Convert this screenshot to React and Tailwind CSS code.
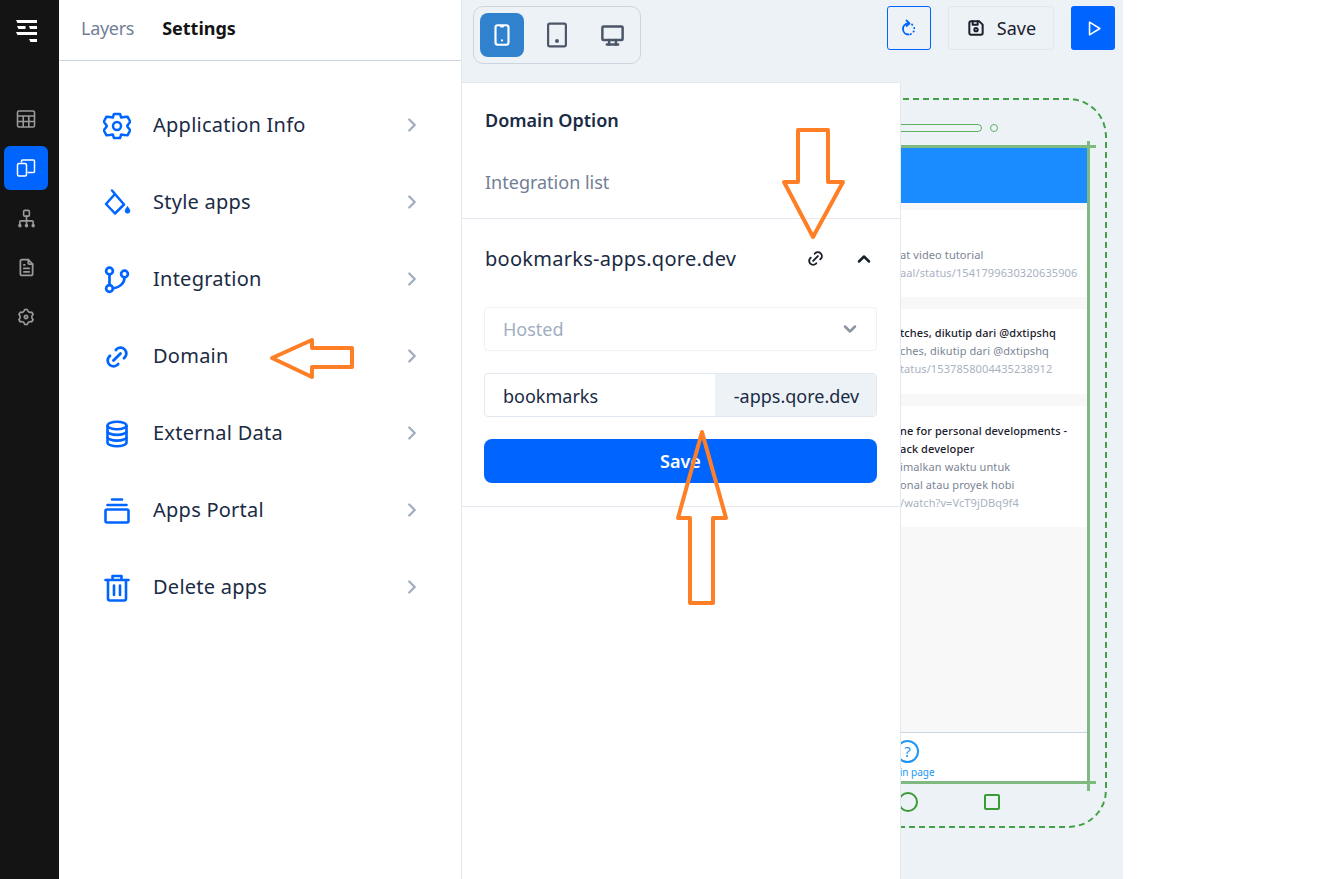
import React from 'react';
import {
  TbFileText, TbLink, TbChevronRight, TbChevronUp, TbChevronDown, TbDeviceMobile,
  TbDeviceDesktop, TbDeviceFloppy, TbPlayerPlay,
} from 'react-icons/tb';
import { RiSettings3Line } from 'react-icons/ri';

const GearIcon = ({ className }) => (
  <svg viewBox="0 0 28 28" fill="none" stroke="currentColor" strokeWidth="2.500" strokeLinejoin="round" className={className}>
    <path d="M11 2h6l1.200 3.500 3-.600 3.300-.200 2.800 5-2.200 2.800-.900 1.500.900 1.500 2.200 2.800-2.800 5-3.300-.200-3-.600L17 26h-6l-1.200-3.500-3 .600-3.300.200-2.800-5 2.200-2.800.900-1.500-.900-1.500-2.200-2.800 2.800-5 3.300.200 3 .600z" />
    <circle cx="14" cy="14" r="4" />
  </svg>
);

const BucketIcon = ({ className }) => (
  <svg viewBox="0 0 28 28" fill="none" stroke="currentColor" strokeWidth="2.500" strokeLinejoin="round" strokeLinecap="round" className={className}>
    <path d="M9 1.500L21 15.500L12 24.500L3 15L12 5" />
    <path d="M24.500 17.500c1.500 2 2.500 3 2.500 4.300a2.500 2.500 0 0 1-5 0c0-1.300 1-2.300 2.500-4.300z" fill="currentColor" strokeWidth="0.500" />
  </svg>
);

const BranchIcon = ({ className }) => (
  <svg viewBox="0 0 28 28" fill="none" stroke="currentColor" strokeWidth="2.700" strokeLinecap="round" className={className}>
    <circle cx="6.500" cy="5" r="3.400" />
    <circle cx="21.500" cy="8" r="3.400" />
    <circle cx="6.500" cy="22.500" r="3.400" />
    <path d="M6.500 8.500v10.500M21.500 11.500c0 6-5 10-11.500 11" />
  </svg>
);

const DatabaseIcon = ({ className }) => (
  <svg viewBox="0 0 28 28" fill="none" stroke="currentColor" strokeWidth="2.600" className={className}>
    <ellipse cx="14" cy="5.500" rx="9.500" ry="3.700" />
    <path d="M4.500 5.500v17c0 2 4.200 3.700 9.500 3.700s9.500-1.700 9.500-3.700v-17" />
    <path d="M4.500 11.200c0 2 4.200 3.700 9.500 3.700s9.500-1.700 9.500-3.700M4.500 16.900c0 2 4.200 3.700 9.500 3.700s9.500-1.700 9.500-3.700" />
  </svg>
);

const PortalIcon = ({ className }) => (
  <svg viewBox="0 0 28 28" fill="none" stroke="currentColor" strokeWidth="2.600" strokeLinecap="round" strokeLinejoin="round" className={className}>
    <path d="M9 2.500h10M4.500 8h19" />
    <rect x="2.500" y="12.500" width="23" height="13" rx="1.500" />
  </svg>
);

const TrashIcon = ({ className }) => (
  <svg viewBox="0 0 28 28" fill="none" stroke="currentColor" strokeWidth="2.600" strokeLinecap="round" strokeLinejoin="round" className={className}>
    <path d="M2.500 6h23M9.500 6V2h9v4" />
    <path d="M5 6v18.500a2 2 0 0 0 2 2h14a2 2 0 0 0 2-2V6" />
    <path d="M11 11.500v9.500M17 11.500v9.500" />
  </svg>
);

const TableIcon = ({ size }) => (
  <svg width={size} height={size} viewBox="0 0 20 20" fill="none" stroke="currentColor" strokeWidth="1.600">
    <rect x="1.500" y="2" width="17" height="16" rx="1.500" />
    <path d="M1.500 7h17M1.500 12.500h17M7.200 7v11M12.800 7v11" />
  </svg>
);

const DevicesIcon = ({ size }) => (
  <svg width={size} height={size} viewBox="0 0 20 20" fill="none" stroke="currentColor" strokeWidth="1.500" strokeLinejoin="round">
    <path d="M5.500 4.500V3a1 1 0 0 1 1-1h11a1 1 0 0 1 1 1v10.500a1 1 0 0 1-1 1h-6" />
    <rect x="1.500" y="5.500" width="9" height="12.500" rx="1.500" />
  </svg>
);

const SitemapIcon = ({ size }) => (
  <svg width={size} height={size} viewBox="0 0 20 20" fill="none" stroke="currentColor" strokeWidth="1.700" strokeLinecap="round">
    <rect x="7" y="1.500" width="6" height="6" rx="1" />
    <path d="M10 7.500v10M3 17v-3.500a1 1 0 0 1 1-1h12a1 1 0 0 1 1 1V17" />
    <circle cx="3" cy="17.500" r="1" fill="currentColor" />
    <circle cx="10" cy="17.500" r="1" fill="currentColor" />
    <circle cx="17" cy="17.500" r="1" fill="currentColor" />
  </svg>
);

const TabletIcon = ({ size }) => (
  <svg width={size} height={size} viewBox="0 0 24 24" fill="none" stroke="currentColor" strokeWidth="2">
    <rect x="3.800" y="1.500" width="16.400" height="21" rx="1.500" />
    <circle cx="12" cy="17.500" r="1.800" fill="currentColor" stroke="none" />
  </svg>
);

const RefreshIcon = ({ size }) => (
  <svg width={size} height={size} viewBox="0 0 18 18" fill="none" stroke="currentColor" strokeWidth="1.800" strokeLinecap="round" strokeLinejoin="round">
    <path d="M8.500 4.500C5 4.500 3 7 3 10c0 3 2.300 5.500 5.500 5.500" />
    <path d="M6.500 1.500L9.500 4.500L6.500 7" />
    <path d="M12 5.500l.3.300M14.200 8.800v.4M13.800 12.300l-.3.300M11 15l-.4.200" />
  </svg>
);

const menu = [
  { icon: GearIcon, label: 'Application Info' },
  { icon: BucketIcon, label: 'Style apps' },
  { icon: BranchIcon, label: 'Integration' },
  { icon: TbLink, label: 'Domain', stroke: 2.4 },
  { icon: DatabaseIcon, label: 'External Data' },
  { icon: PortalIcon, label: 'Apps Portal' },
  { icon: TrashIcon, label: 'Delete apps' },
];

const Rail = () => (
  <div className="w-[59px] shrink-0 bg-[#141414] flex flex-col items-center pr-[7px]">
    <svg viewBox="0 0 24 24" className="w-[24px] h-[24px] mt-[19px] ml-[1px]" fill="#fff">
      <path d="M1 1h21v3H2.500zM2 7h8.500v3H3.500zM14 7h8v3h-7zM1 13h21v3H2.500zM14 20h8v3h-6.500z" />
    </svg>
    <div className="mt-[54px] flex flex-col items-center text-[#9a9a9a]">
      <div className="w-[44px] h-[44px] flex items-center justify-center"><TableIcon size={20} /></div>
      <div className="mt-[5px] w-[44px] h-[44px] rounded-[6px] bg-[#0065ff] flex items-center justify-center text-white"><DevicesIcon size={20} /></div>
      <div className="mt-[6px] w-[44px] h-[44px] flex items-center justify-center"><SitemapIcon size={19} /></div>
      <div className="mt-[5px] w-[44px] h-[44px] flex items-center justify-center"><TbFileText size={21} /></div>
      <div className="mt-[6px] w-[44px] h-[44px] flex items-center justify-center"><RiSettings3Line size={20} /></div>
    </div>
  </div>
);

const SettingsPanel = () => (
  <div className="w-[403px] shrink-0 bg-white border-r border-[#e2e8f0] flex flex-col">
    <div className="h-[61px] border-b border-[#cbd5e0] flex items-center px-[22px] gap-[28px] text-[18px] pb-[3px]">
      <span className="text-[#718096] tracking-[-0.3px]">Layers</span>
      <span className="font-bold text-[#141414]">Settings</span>
    </div>
    <div className="pt-[26px] pl-[43px] pr-[38px]">
      {menu.map((item) => (
        <div key={item.label} className="h-[77px] flex items-center text-[#1a2b44]">
          <div className="w-[29px] flex items-center justify-center shrink-0">
            <item.icon className="w-[28px] h-[28px] text-[#0065ff] shrink-0" strokeWidth={item.stroke} />
          </div>
          <span className="ml-[22px] text-[20px] tracking-[0.25px] flex-1 pb-[1px]">{item.label}</span>
          <TbChevronRight className="w-[22px] h-[22px] text-[#a0aec0] mb-[1px]" strokeWidth={2.5} />
        </div>
      ))}
    </div>
  </div>
);

const Toolbar = () => (
  <div className="h-[82px] flex items-start justify-between pt-[6px] pl-[11px] pr-[8px] relative z-10">
    <div className="h-[58px] w-[168px] rounded-[10px] border border-[#cbd5e0] flex items-center pl-[6px] text-[#4a5568]">
      <div className="w-[44px] h-[44px] rounded-[8px] bg-[#3182ce] text-white flex items-center justify-center"><TbDeviceMobile size={26} /></div>
      <div className="w-[44px] h-[44px] ml-[11px] flex items-center justify-center"><TabletIcon size={26} /></div>
      <div className="w-[44px] h-[44px] ml-[11px] flex items-center justify-center"><TbDeviceDesktop size={27} strokeWidth={2.2} /></div>
    </div>
    <div className="flex gap-[17px]">
      <div className="w-[44px] h-[44px] rounded-[3px] border border-[#0065ff] text-[#0065ff] flex items-center justify-center"><RefreshIcon size={18} /></div>
      <div className="w-[106px] h-[44px] rounded-[3px] border border-[#e2e8f0] flex items-center justify-center gap-[11px] text-[18px] text-[#1a202c]">
        <TbDeviceFloppy size={20} strokeWidth={2.4} /> Save
      </div>
      <div className="w-[44px] h-[44px] rounded-[3px] bg-[#0065ff] text-white flex items-center justify-center"><TbPlayerPlay size={19} /></div>
    </div>
  </div>
);

const DomainPanel = () => (
  <div className="w-[439px] flex-1 bg-white border-r border-t border-[#e2e8f0] relative z-10">
    <div className="h-[136px] border-b border-[#e2e8f0] pl-[23px]">
      <div className="pt-[24px] text-[18px] font-semibold leading-[26px] text-[#1a2b44]">Domain Option</div>
      <div className="pt-[36px] text-[18px] leading-[26px] text-[#718096]">Integration list</div>
    </div>
    <div className="h-[288px] border-b border-[#e2e8f0] pl-[22px] pr-[23px]">
      <div className="h-[80px] flex items-center text-[#1a2b44]">
        <span className="text-[20px] tracking-[0.27px] flex-1 pl-[1px] pb-[1px]">bookmarks-apps.qore.dev</span>
        <TbLink className="w-[19px] h-[19px] text-[#1a202c] mb-[1px]" strokeWidth={2.4} />
        <TbChevronUp className="w-[20px] h-[20px] ml-[29px] mr-[3px] mb-[1px] text-[#1a202c]" strokeWidth={3} />
      </div>
      <div className="mt-[8px] h-[44px] rounded-[4px] border border-[#edf2f7] flex items-center justify-between pl-[18px] pr-[16px] text-[18px] text-[#a0aec0]">
        Hosted
        <TbChevronDown className="w-[20px] h-[20px] text-[#8c95a3]" strokeWidth={3} />
      </div>
      <div className="mt-[22px] h-[44px] rounded-[4px] border border-[#e2e8f0] flex items-center text-[18px] text-[#1a2b44]">
        <span className="flex-1 pl-[18px] pt-[2px]">bookmarks</span>
        <span className="h-full w-[161px] bg-[#edf2f7] flex items-center justify-center rounded-r-[4px] pt-[2px] pl-[2px]">-apps.qore.dev</span>
      </div>
      <div className="mt-[22px] h-[44px] rounded-[8px] bg-[#0065ff] text-white font-semibold text-[18px] pt-[1px] flex items-center justify-center">Save</div>
    </div>
  </div>
);

const lineColor = { title: 'text-[#1a202c] font-medium', link: 'text-[#a9b2bf]', body: 'text-[#7c8594]' };

const PreviewCard = ({ lines, className }) => (
  <div className={`bg-white overflow-hidden whitespace-nowrap text-[11px] tracking-[0.1px] leading-[18px] pl-[96px] shrink-0 ${className}`}>
    {lines.map(([text, kind]) => (
      <div key={text} className={lineColor[kind]}>{text}</div>
    ))}
  </div>
);

const PhonePreview = () => (
  <div className="absolute left-[340px] top-[98px] w-[305px] h-[730px] rounded-r-[38px] border-2 border-dashed border-[#43a047]">
    <div className="absolute left-0 top-[24px] w-[178px] h-[8px] rounded-r-full border border-[#5fb35f]" />
    <div className="absolute left-[186px] top-[24px] w-[8px] h-[8px] rounded-full border border-[#5fb35f]" />
    {/* screen */}
    <div className="absolute left-0 top-[47px] w-[284px] h-[636px] bg-[#f8f8f8] flex flex-col">
      <div className="h-[56px] bg-[#1a8cff] shrink-0" />
      <PreviewCard className="mt-[7px] h-[87px] pt-[36px]" lines={[
        ['at video tutorial', 'body'],
        ['aal/status/1541799630320635906', 'link'],
      ]} />
      <PreviewCard className="mt-[12px] h-[85px] pt-[15px]" lines={[
        ['tches, dikutip dari @dxtipshq', 'title'],
        ['ches, dikutip dari @dxtipshq', 'body'],
        ['tatus/1537858004435238912', 'link'],
      ]} />
      <PreviewCard className="mt-[12px] h-[121px] pt-[16px]" lines={[
        ['ne for personal developments -', 'title'],
        ['ack developer', 'title'],
        ['imalkan waktu untuk', 'body'],
        ['onal atau proyek hobi', 'body'],
        ['/watch?v=VcT9jDBq9f4', 'link'],
      ]} />
      <div className="flex-1" />
      <div className="h-[51px] shrink-0 bg-white border-t border-[#cbd5e0] relative">
        <div className="absolute left-[92px] top-[7px] w-[23px] h-[23px] rounded-full border-2 border-[#2196f3] text-[#2196f3] text-[15px] leading-[19px] text-center">?</div>
        <div className="absolute left-[81px] top-[32px] text-[10px] leading-[14px] text-[#2196f3] whitespace-nowrap">Main page</div>
      </div>
    </div>
    <div className="absolute left-0 top-[45px] w-[292px] h-[3px] bg-[#7fb97f]" />
    <div className="absolute left-0 top-[681px] w-[292px] h-[3px] bg-[#7fb97f]" />
    <div className="absolute left-[283px] top-[41px] w-[3px] h-[650px] bg-[#7fb97f]" />
    <div className="absolute left-[94px] top-[692px] w-[20px] h-[20px] rounded-full border-2 border-[#3a9a34]" />
    <div className="absolute left-[180px] top-[694px] w-[16px] h-[16px] rounded-[2px] border-2 border-[#3a9a34]" />
  </div>
);

const Arrows = () => (
  <svg className="absolute inset-0 w-[1332px] h-[879px] pointer-events-none z-20" fill="none" stroke="#ff7f27" strokeWidth="4" strokeLinejoin="round">
    <path d="M272 358 L312 340 V348 H352 V367 H312 V377 Z" />
    <path d="M798 130 H828 V182 H843 L813 237 L784 182 H798 Z" />
    <path d="M702 432 L726 518 H713 V603 H690 V518 H678 Z" />
  </svg>
);

const App = () => (
  <div className="relative w-[1332px] h-[879px] flex overflow-hidden bg-white font-['Noto_Sans',sans-serif]">
    <Rail />
    <SettingsPanel />
    <div className="relative w-[661px] shrink-0 bg-[#edf2f7] flex flex-col overflow-hidden">
      <PhonePreview />
      <Toolbar />
      <DomainPanel />
    </div>
    <Arrows />
  </div>
);

export default App;
